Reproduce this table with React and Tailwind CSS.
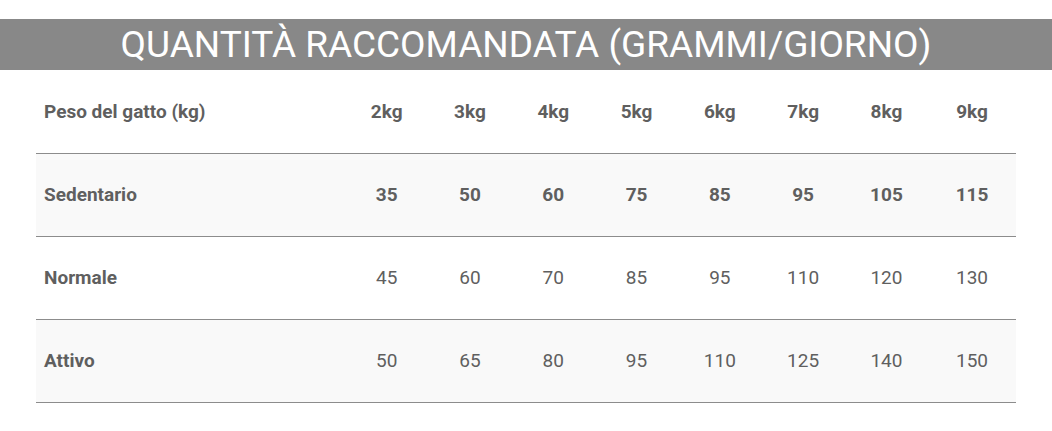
const App = () => {
  const weights = ["2kg", "3kg", "4kg", "5kg", "6kg", "7kg", "8kg", "9kg"];
  const rows = [
    { label: "Sedentario", values: [35, 50, 60, 75, 85, 95, 105, 115], bold: true, shaded: true },
    { label: "Normale", values: [45, 60, 70, 85, 95, 110, 120, 130], bold: false, shaded: false },
    { label: "Attivo", values: [50, 65, 80, 95, 110, 125, 140, 150], bold: false, shaded: true },
  ];

  return (
    <div className="min-h-[431px] bg-white pt-[19px] font-['Roboto',sans-serif] text-[#5f5f5f]">
      <h2 className="h-[51px] bg-[#888888] text-center text-[37px] leading-[51px] text-white">
        QUANTITÀ RACCOMANDATA (GRAMMI/GIORNO)
      </h2>

      <div className="px-[36px]">
        <table className="w-[980px] table-fixed border-collapse text-[19px]">
          <colgroup>
            <col className="w-[309px]" />
            {weights.slice(0, 7).map((w) => (
              <col key={w} className="w-[83.3px]" />
            ))}
            <col />
          </colgroup>
          <thead>
            <tr className="h-[83px] border-b border-[#8c8c8c]">
              <th className="pl-2 pt-[2px] text-left font-bold">Peso del gatto (kg)</th>
              {weights.map((w) => (
                <th key={w} className="pt-[2px] text-center font-bold">
                  {w}
                </th>
              ))}
            </tr>
          </thead>
          <tbody>
            {rows.map((row) => (
              <tr
                key={row.label}
                className={`h-[83px] border-b border-[#8c8c8c] ${row.shaded ? "bg-[#f9f9f9]" : "bg-white"}`}
              >
                <td className="pl-2 pt-[2px] text-left font-bold">{row.label}</td>
                {row.values.map((v, i) => (
                  <td key={i} className={`pt-[2px] text-center ${row.bold ? "font-bold" : "font-normal"}`}>
                    {v}
                  </td>
                ))}
              </tr>
            ))}
          </tbody>
        </table>
      </div>
    </div>
  );
};

export default App;
